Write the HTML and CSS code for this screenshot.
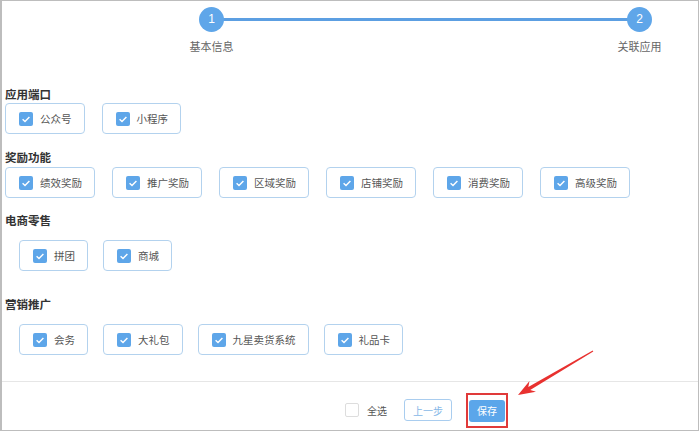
FILE: index.html
```html
<!DOCTYPE html>
<html lang="zh">
<head>
  <meta charset="UTF-8">
  <title>关联应用</title>
  <link rel="stylesheet" href="styles.css">
</head>
<body>
  <div class="page">
    <!-- Шаги -->
    <div class="steps">
      <span class="step-dot">1</span>
      <span class="step-line"></span>
      <span class="step-dot">2</span>
      <span class="step-label">基本信息</span>
      <span></span>
      <span class="step-label">关联应用</span>
    </div>

    <div class="form">
      <div class="group first">
        <div class="group-title">应用端口</div>
        <div class="options tight">
          <label class="option"><span class="check"><svg viewBox="0 0 14 14"><path d="M3.6 7.3 L6 9.6 L10.4 4.9"/></svg></span>公众号</label>
          <label class="option"><span class="check"><svg viewBox="0 0 14 14"><path d="M3.6 7.3 L6 9.6 L10.4 4.9"/></svg></span>小程序</label>
        </div>
      </div>

      <div class="group second">
        <div class="group-title">奖励功能</div>
        <div class="options tight">
          <label class="option"><span class="check"><svg viewBox="0 0 14 14"><path d="M3.6 7.3 L6 9.6 L10.4 4.9"/></svg></span>绩效奖励</label>
          <label class="option"><span class="check"><svg viewBox="0 0 14 14"><path d="M3.6 7.3 L6 9.6 L10.4 4.9"/></svg></span>推广奖励</label>
          <label class="option"><span class="check"><svg viewBox="0 0 14 14"><path d="M3.6 7.3 L6 9.6 L10.4 4.9"/></svg></span>区域奖励</label>
          <label class="option"><span class="check"><svg viewBox="0 0 14 14"><path d="M3.6 7.3 L6 9.6 L10.4 4.9"/></svg></span>店铺奖励</label>
          <label class="option"><span class="check"><svg viewBox="0 0 14 14"><path d="M3.6 7.3 L6 9.6 L10.4 4.9"/></svg></span>消费奖励</label>
          <label class="option"><span class="check"><svg viewBox="0 0 14 14"><path d="M3.6 7.3 L6 9.6 L10.4 4.9"/></svg></span>高级奖励</label>
        </div>
      </div>

      <div class="group third">
        <div class="group-title">电商零售</div>
        <div class="options indent">
          <label class="option"><span class="check"><svg viewBox="0 0 14 14"><path d="M3.6 7.3 L6 9.6 L10.4 4.9"/></svg></span>拼团</label>
          <label class="option"><span class="check"><svg viewBox="0 0 14 14"><path d="M3.6 7.3 L6 9.6 L10.4 4.9"/></svg></span>商城</label>
        </div>
      </div>

      <div class="group fourth">
        <div class="group-title">营销推广</div>
        <div class="options indent">
          <label class="option"><span class="check"><svg viewBox="0 0 14 14"><path d="M3.6 7.3 L6 9.6 L10.4 4.9"/></svg></span>会务</label>
          <label class="option"><span class="check"><svg viewBox="0 0 14 14"><path d="M3.6 7.3 L6 9.6 L10.4 4.9"/></svg></span>大礼包</label>
          <label class="option"><span class="check"><svg viewBox="0 0 14 14"><path d="M3.6 7.3 L6 9.6 L10.4 4.9"/></svg></span>九星卖货系统</label>
          <label class="option"><span class="check"><svg viewBox="0 0 14 14"><path d="M3.6 7.3 L6 9.6 L10.4 4.9"/></svg></span>礼品卡</label>
        </div>
      </div>
    </div>

    <!-- Низ формы -->
    <div class="footer">
      <label class="select-all"><span class="box"></span>全选</label>
      <button class="btn btn-prev">上一步</button>
      <span class="highlight"><button class="btn btn-save">保存</button></span>
    </div>

    <!-- Стрелка-пометка -->
    <svg class="arrow" viewBox="0 0 699 432">
      <polygon points="593.3,351.4 530.2,389.9 536,391.8 518,395 529.5,381 528.3,386.9 592.7,350.6" fill="#e8312f"/>
    </svg>
  </div>
</body>
</html>
```

FILE: styles.css
```css
/* Основные стили */
body {
  margin: 0;
  background: #ffffff;
  font-family: "Liberation Sans", "Noto Sans CJK SC", sans-serif;
}

.page {
  position: relative;
  width: 699px;
  height: 431px;
  box-sizing: border-box;
  border: 1px solid #bdbdbd;
  border-left-width: 2px;
  display: flex;
  flex-direction: column;
  overflow: hidden;
}

/* Шаги */
.steps {
  display: grid;
  grid-template-columns: 25px 1fr 25px;
  width: 453px;
  margin: 6px 0 0 197px;
}

.step-dot {
  position: relative;
  z-index: 1;
  width: 25px;
  height: 25px;
  border-radius: 50%;
  background: #5fa6e9;
  color: #ffffff;
  font-size: 12px;
  line-height: 25px;
  text-align: center;
}

.step-line {
  align-self: center;
  height: 3px;
  margin: 0 -2px;
  background: #5c9fe2;
}

.step-label {
  margin: 8px -25px 0;
  font-size: 11px;
  line-height: 14px;
  color: #666666;
  text-align: center;
  white-space: nowrap;
}

/* Группы */
.form {
  flex: 1;
  padding-left: 3px;
}

.group-title {
  font-size: 11.5px;
  line-height: 14px;
  font-weight: bold;
  color: #333333;
}

.group.first { margin-top: 34px; }
.group.second { margin-top: 17px; }
.group.third { margin-top: 16px; }
.group.fourth { margin-top: 27px; }

.options {
  display: flex;
  gap: 17px;
}

.options.tight { margin-top: 1px; }
.group.second .options { margin-top: 2px; }

.options.indent {
  margin-top: 12px;
  padding-left: 14px;
  gap: 15px;
}

.option {
  display: flex;
  align-items: center;
  height: 31px;
  box-sizing: border-box;
  padding: 0 12px 0 13px;
  border: 1px solid #b3d2ee;
  border-radius: 4px;
  font-size: 10.5px;
  color: #555555;
  white-space: nowrap;
}

.check {
  display: inline-block;
  width: 14px;
  height: 14px;
  margin-right: 7px;
  border-radius: 2px;
  background: #5ea6e9;
}

.check svg {
  display: block;
  width: 14px;
  height: 14px;
  fill: none;
  stroke: #ffffff;
  stroke-width: 1.4;
}

/* Низ */
.footer {
  height: 49px;
  box-sizing: border-box;
  border-top: 1px solid #e6e6e6;
  display: flex;
  align-items: center;
  padding: 8px 0 0 343px;
}

.select-all {
  display: flex;
  align-items: center;
  font-size: 10px;
  color: #555555;
  margin-right: 17px;
}

.select-all .box {
  width: 12px;
  height: 12px;
  border: 1px solid #dddddd;
  border-radius: 2px;
  margin-right: 8px;
}

.btn {
  height: 22px;
  padding: 0 8px;
  border-radius: 3px;
  font-family: inherit;
  font-size: 10px;
  cursor: pointer;
}

.btn-prev {
  background: #ffffff;
  border: 1px solid #a9cdef;
  color: #86b7e7;
  margin-right: 14px;
}

.btn-save {
  display: block;
  background: #5ba6ea;
  border: none;
  color: #ffffff;
}

.highlight {
  border: 2px solid #e03a3a;
  padding: 5px 1px 4px;
}

.arrow {
  position: absolute;
  top: -1px;
  left: -2px;
  width: 699px;
  height: 432px;
  pointer-events: none;
}
```
